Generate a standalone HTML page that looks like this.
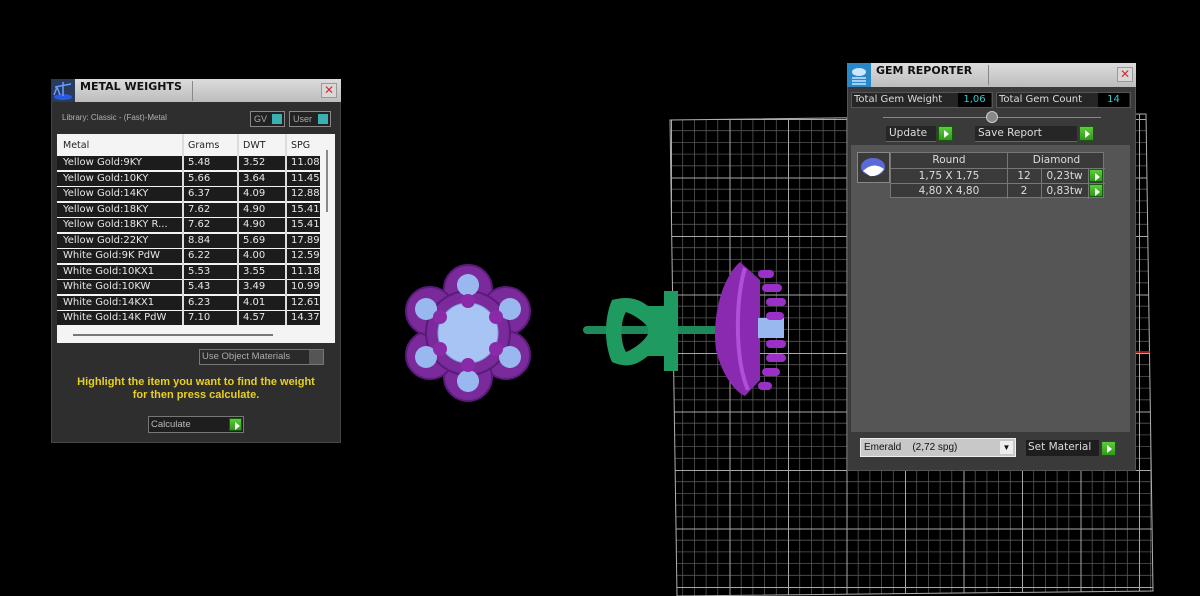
<!DOCTYPE html>
<html><head><meta charset="utf-8"><style>
*{margin:0;padding:0;box-sizing:border-box}
body{width:1200px;height:596px;background:#000;position:relative;overflow:hidden;font-family:"Liberation Sans","DejaVu Sans",sans-serif}
.a{position:absolute}
.t{font-family:"DejaVu Sans","Liberation Sans",sans-serif}
.title{background:linear-gradient(#dcdcdc,#bdbdbd);color:#111;font-weight:bold;font-size:11px}
.gbtn{background:linear-gradient(#5ccc3a,#2e9a1a);border:1px solid #1a5a10}
.gbtn:after{content:"";position:absolute;left:5px;top:3px;border-left:5px solid #fff;border-top:4px solid transparent;border-bottom:4px solid transparent}
.row{position:absolute;left:0;width:278px;height:14px;background:#1c1c1c;color:#e8e8e8;font-size:10px;line-height:14px}
.row span{position:absolute;top:0}
.sep{position:absolute;top:0;bottom:0;width:2px;background:#d8d8d8}
</style></head><body>

<svg class="a" style="left:0;top:0" width="1200" height="596">
<defs>
<pattern id="g" x="671" y="119" width="58.5" height="58.5" patternUnits="userSpaceOnUse">
<path d="M11.7 0V58.5M23.4 0V58.5M35.1 0V58.5M46.8 0V58.5M0 11.7H58.5M0 23.4H58.5M0 35.1H58.5M0 46.8H58.5" stroke="#555" stroke-width="0.8" fill="none"/>
<path d="M0.5 0V58.5M0 0.5H58.5" stroke="#a8a8a8" stroke-width="1" fill="none"/>
</pattern>
</defs>
<polygon points="670,120 1146,114 1153,591 677,596" fill="url(#g)" stroke="#b0b0b0" stroke-width="1"/>
<line x1="1136" y1="352" x2="1150" y2="352" stroke="#d02010" stroke-width="1.5"/>
</svg>

<svg class="a" style="left:0;top:0" width="1200" height="596">
<g transform="translate(468,333)">
<g fill="#7a2a9a" stroke="#5a1a7a" stroke-width="2">
<circle cx="0" cy="-44" r="24"/><circle cx="38" cy="-22" r="24"/><circle cx="38" cy="22" r="24"/>
<circle cx="0" cy="44" r="24"/><circle cx="-38" cy="22" r="24"/><circle cx="-38" cy="-22" r="24"/>
<circle r="42"/>
</g>
<g fill="#9ab8f0">
<circle cx="0" cy="-48" r="11"/><circle cx="42" cy="-24" r="11"/><circle cx="42" cy="24" r="11"/>
<circle cx="0" cy="48" r="11"/><circle cx="-42" cy="24" r="11"/><circle cx="-42" cy="-24" r="11"/>
<circle r="30" fill="#a8c4f4" stroke="#7fa0e0"/>
</g>
<g fill="#8a2aa8"><circle cx="0" cy="-32" r="7"/><circle cx="28" cy="-16" r="7"/><circle cx="28" cy="16" r="7"/><circle cx="0" cy="32" r="7"/><circle cx="-28" cy="16" r="7"/><circle cx="-28" cy="-16" r="7"/></g>
</g>
<rect x="583" y="326" width="140" height="8" rx="4" fill="#1e8a5a"/>
<path d="M612 300 C630 295 640 300 648 306 L664 306 L664 291 L678 291 L678 371 L664 371 L664 356 L648 356 C640 362 630 370 612 362 C604 345 604 318 612 300 Z M626 312 C620 322 620 342 626 352 C636 348 645 340 648 334 L648 328 C645 322 636 316 626 312 Z" fill="#1f9a60" fill-rule="evenodd"/>
<path d="M740 262 C720 280 712 320 716 350 C722 375 735 392 745 396 L760 380 L760 280 Z" fill="#8a2ab0"/>
<path d="M745 268 C735 300 735 360 748 390" stroke="#b050d8" stroke-width="4" fill="none"/>
<rect x="758" y="318" width="26" height="20" fill="#9ab8f0"/>
<g fill="#9a30c8">
<rect x="758" y="270" width="16" height="8" rx="4"/><rect x="762" y="284" width="20" height="8" rx="4"/><rect x="766" y="298" width="20" height="8" rx="4"/><rect x="766" y="312" width="18" height="8" rx="4"/>
<rect x="766" y="340" width="20" height="8" rx="4"/><rect x="766" y="354" width="20" height="8" rx="4"/><rect x="762" y="368" width="18" height="8" rx="4"/><rect x="758" y="382" width="14" height="8" rx="4"/>
</g>
</svg>

<!-- METAL WEIGHTS -->
<div class="a" style="left:51px;top:79px;width:290px;height:364px;background:#2e2e2e;border:1px solid #444"></div>
<div class="a title" style="left:75px;top:79px;width:266px;height:23px;"></div>
<div class="a" style="left:192px;top:81px;width:1px;height:20px;background:#888"></div>
<div class="a title t" style="left:80px;top:80px;background:none;font-size:11px">METAL WEIGHTS</div>
<div class="a" style="left:51px;top:79px;width:24px;height:23px;background:#2a3a5a"></div>
<svg class="a" style="left:51px;top:79px" width="24" height="23"><ellipse cx="12" cy="18" rx="9" ry="3" fill="#2a5ae0"/><path d="M12 3 L12 17 M4 8 L20 5 M6 8 L3 16 M6 8 L9 16" stroke="#6a9aff" stroke-width="1.5" fill="none"/></svg>
<div class="a" style="left:321px;top:83px;width:16px;height:15px;background:#d8d8d8;border:1px solid #999;color:#c33;font-size:12px;line-height:13px;text-align:center">✕</div>
<div class="a" style="left:62px;top:113px;color:#b0b0b0;font-size:8px">Library: Classic - (Fast)-Metal</div>
<div class="a" style="left:250px;top:111px;width:35px;height:16px;border:1px solid #888;background:#222;color:#aaa;font-size:9px;line-height:14px;padding-left:3px">GV<div class="a" style="right:2px;top:2px;width:10px;height:10px;background:#3ab0b0"></div></div>
<div class="a" style="left:289px;top:111px;width:42px;height:16px;border:1px solid #888;background:#222;color:#aaa;font-size:9px;line-height:14px;padding-left:3px">User<div class="a" style="right:2px;top:2px;width:10px;height:10px;background:#3ab0b0"></div></div>

<div class="a t" style="left:57px;top:134px;width:278px;height:209px;background:#f4f4f4;overflow:hidden">
<div class="a" style="left:6px;top:6px;font-size:9.5px;color:#222">Metal</div>
<div class="a" style="left:131px;top:6px;font-size:9.5px;color:#222">Grams</div>
<div class="a" style="left:186px;top:6px;font-size:9.5px;color:#222">DWT</div>
<div class="a" style="left:234px;top:6px;font-size:9.5px;color:#222">SPG</div>
<div class="row" style="top:22px"><span style="left:6px">Yellow Gold:9KY</span><span style="left:131px">5.48</span><span style="left:186px">3.52</span><span style="left:234px">11.08</span></div>
<div class="row" style="top:37.5px"><span style="left:6px">Yellow Gold:10KY</span><span style="left:131px">5.66</span><span style="left:186px">3.64</span><span style="left:234px">11.45</span></div>
<div class="row" style="top:53px"><span style="left:6px">Yellow Gold:14KY</span><span style="left:131px">6.37</span><span style="left:186px">4.09</span><span style="left:234px">12.88</span></div>
<div class="row" style="top:68.5px"><span style="left:6px">Yellow Gold:18KY</span><span style="left:131px">7.62</span><span style="left:186px">4.90</span><span style="left:234px">15.41</span></div>
<div class="row" style="top:84px"><span style="left:6px">Yellow Gold:18KY R...</span><span style="left:131px">7.62</span><span style="left:186px">4.90</span><span style="left:234px">15.41</span></div>
<div class="row" style="top:99.5px"><span style="left:6px">Yellow Gold:22KY</span><span style="left:131px">8.84</span><span style="left:186px">5.69</span><span style="left:234px">17.89</span></div>
<div class="row" style="top:115px"><span style="left:6px">White Gold:9K PdW</span><span style="left:131px">6.22</span><span style="left:186px">4.00</span><span style="left:234px">12.59</span></div>
<div class="row" style="top:130.5px"><span style="left:6px">White Gold:10KX1</span><span style="left:131px">5.53</span><span style="left:186px">3.55</span><span style="left:234px">11.18</span></div>
<div class="row" style="top:146px"><span style="left:6px">White Gold:10KW</span><span style="left:131px">5.43</span><span style="left:186px">3.49</span><span style="left:234px">10.99</span></div>
<div class="row" style="top:161.5px"><span style="left:6px">White Gold:14KX1</span><span style="left:131px">6.23</span><span style="left:186px">4.01</span><span style="left:234px">12.61</span></div>
<div class="row" style="top:177px"><span style="left:6px">White Gold:14K PdW</span><span style="left:131px">7.10</span><span style="left:186px">4.57</span><span style="left:234px">14.37</span></div>
<div class="sep" style="left:125px;top:0;height:191px;background:#ddd;width:2px"></div>
<div class="sep" style="left:180px;top:0;height:191px;background:#ddd;width:2px"></div>
<div class="sep" style="left:228px;top:0;height:191px;background:#ddd;width:2px"></div>
<div class="a" style="left:263px;top:0;width:15px;height:191px;background:#f4f4f4"></div>
<div class="a" style="left:269px;top:16px;width:2px;height:62px;background:#888"></div>
<div class="a" style="left:16px;top:200px;width:200px;height:2px;background:#777"></div>
</div>

<div class="a" style="left:199px;top:349px;width:125px;height:16px;border:1px solid #777;background:#2a2a2a;color:#aaa;font-size:9.5px;line-height:14px;padding-left:2px">Use Object Materials<div class="a" style="right:0;top:0;width:14px;height:14px;background:#555"></div></div>
<div class="a" style="left:51px;top:376px;width:290px;text-align:center;color:#e8d020;font-weight:bold;font-size:11px;line-height:13px">Highlight the item you want to find the weight<br>for then press calculate.</div>
<div class="a" style="left:148px;top:416px;width:96px;height:17px;border:1px solid #777;background:#1e1e1e;color:#bbb;font-size:9.5px;line-height:15px;padding-left:2px">Calculate<div class="a gbtn" style="right:1px;top:1px;width:13px;height:13px"></div></div>

<!-- GEM REPORTER -->
<div class="a" style="left:847px;top:63px;width:289px;height:408px;background:#3a3a3a;border:1px solid #555"></div>
<div class="a title" style="left:871px;top:63px;width:265px;height:24px"></div>
<div class="a" style="left:988px;top:65px;width:1px;height:20px;background:#888"></div>
<div class="a title t" style="left:876px;top:64px;background:none">GEM REPORTER</div>
<div class="a" style="left:847px;top:63px;width:24px;height:24px;background:#2a88c8"><svg width="24" height="24"><ellipse cx="12" cy="9" rx="7" ry="4" fill="#cfe6ff"/><path d="M5 15h14M5 18h14M5 21h14" stroke="#cfe6ff" stroke-width="1.5"/></svg></div>
<div class="a" style="left:1117px;top:67px;width:16px;height:15px;background:#d8d8d8;border:1px solid #999;color:#c33;font-size:12px;line-height:13px;text-align:center">✕</div>

<div class="a t" style="left:851px;top:92px;width:142px;height:16px;background:#262626;border:1px solid #555;color:#ddd;font-size:10px;line-height:14px;padding-left:2px">Total Gem Weight<div class="a" style="right:1px;top:0;width:33px;height:14px;background:#000;color:#3cc;text-align:center">1,06</div></div>
<div class="a t" style="left:996px;top:92px;width:135px;height:16px;background:#262626;border:1px solid #555;color:#ddd;font-size:10px;line-height:14px;padding-left:2px">Total Gem Count<div class="a" style="right:1px;top:0;width:31px;height:14px;background:#000;color:#3cc;text-align:center">14</div></div>
<div class="a" style="left:883px;top:117px;width:218px;height:1px;background:#888"></div>
<div class="a" style="left:986px;top:111px;width:12px;height:12px;border-radius:6px;background:#888;border:1px solid #ccc"></div>
<div class="a t" style="left:886px;top:126px;width:50px;height:16px;background:#262626;border-bottom:1px solid #666;color:#ddd;font-size:10.5px;line-height:15px;padding-left:3px">Update</div>
<div class="a gbtn" style="left:938px;top:126px;width:15px;height:15px"></div>
<div class="a t" style="left:975px;top:126px;width:102px;height:16px;background:#262626;border-bottom:1px solid #666;color:#ddd;font-size:10.5px;line-height:15px;padding-left:3px">Save Report</div>
<div class="a gbtn" style="left:1079px;top:126px;width:15px;height:15px"></div>

<div class="a" style="left:851px;top:145px;width:279px;height:287px;background:#555"></div>
<div class="a" style="left:857px;top:152px;width:33px;height:31px;background:#3a3a3a;border:1px solid #888"><svg width="31" height="29"><ellipse cx="15" cy="14" rx="12" ry="9" fill="#5a6ad8"/><path d="M5 18 Q15 8 26 16 Q20 24 12 23 Z" fill="#fff"/></svg></div>
<div class="a t" style="left:890px;top:152px;width:214px;height:46px;background:#3a3a3a;border:1px solid #777;color:#ddd;font-size:10.5px">
<div class="a" style="left:0;top:0;width:116px;height:15px;text-align:center;line-height:14px">Round</div>
<div class="a" style="left:116px;top:0;width:98px;height:15px;text-align:center;line-height:14px;border-left:1px solid #777">Diamond</div>
<div class="a" style="left:0;top:15px;width:214px;height:1px;background:#777"></div>
<div class="a" style="left:0;top:30px;width:214px;height:1px;background:#777"></div>
<div class="a" style="left:0;top:16px;width:116px;text-align:center;line-height:14px">1,75 X 1,75</div>
<div class="a" style="left:0;top:31px;width:116px;text-align:center;line-height:14px">4,80 X 4,80</div>
<div class="a" style="left:116px;top:15px;width:1px;height:31px;background:#777"></div>
<div class="a" style="left:150px;top:15px;width:1px;height:31px;background:#777"></div>
<div class="a" style="left:197px;top:15px;width:1px;height:31px;background:#777"></div>
<div class="a" style="left:116px;top:16px;width:34px;text-align:center;line-height:14px">12</div>
<div class="a" style="left:116px;top:31px;width:34px;text-align:center;line-height:14px">2</div>
<div class="a" style="left:150px;top:16px;width:47px;text-align:center;line-height:14px">0,23tw</div>
<div class="a" style="left:150px;top:31px;width:47px;text-align:center;line-height:14px">0,83tw</div>
<div class="a gbtn" style="left:198px;top:16px;width:14px;height:13px"></div>
<div class="a gbtn" style="left:198px;top:31px;width:14px;height:13px"></div>
</div>

<div class="a" style="left:860px;top:438px;width:156px;height:19px;background:#c8c8c8;border:1px solid #eee;color:#111;font-size:10px;line-height:17px;padding-left:3px">Emerald &nbsp;&nbsp;&nbsp;(2,72 spg)<div class="a" style="right:2px;top:2px;width:13px;height:13px;background:#eee;font-size:8px;line-height:13px;text-align:center">▼</div></div>
<div class="a t" style="left:1026px;top:440px;width:73px;height:16px;background:#1e1e1e;color:#ddd;font-size:10.5px;line-height:15px;padding-left:2px">Set Material</div>
<div class="a gbtn" style="left:1101px;top:441px;width:15px;height:15px"></div>
</body></html>
